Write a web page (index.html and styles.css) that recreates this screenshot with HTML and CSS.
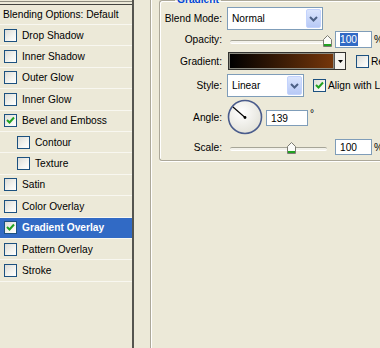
FILE: index.html
```html
<!DOCTYPE html>
<html lang="en">
  <head>
    <meta charset="UTF-8" />
    <title>Layer Style - Gradient Overlay</title>
    <link rel="stylesheet" href="styles.css">
  </head>
  <body>
    <div class="dialog">
      <div class="styles-list">
        <div class="list-top"></div>
        <div class="list-head">Blending Options: Default</div>
        <div class="layer-row"><span class="check"></span>Drop Shadow</div>
        <div class="layer-row"><span class="check"></span>Inner Shadow</div>
        <div class="layer-row"><span class="check"></span>Outer Glow</div>
        <div class="layer-row"><span class="check"></span>Inner Glow</div>
        <div class="layer-row">
          <span class="check"><svg width="11" height="11" viewBox="0 0 11 11"><polyline points="2,5 4.5,7.5 9,2.5" fill="none" stroke="#21a121" stroke-width="2"/></svg></span>Bevel and Emboss
        </div>
        <div class="layer-row sub"><span class="check"></span>Contour</div>
        <div class="layer-row sub"><span class="check"></span>Texture</div>
        <div class="layer-row"><span class="check"></span>Satin</div>
        <div class="layer-row"><span class="check"></span>Color Overlay</div>
        <div class="layer-row selected">
          <span class="check"><svg width="11" height="11" viewBox="0 0 11 11"><polyline points="2,5 4.5,7.5 9,2.5" fill="none" stroke="#21a121" stroke-width="2"/></svg></span>Gradient Overlay
        </div>
        <div class="layer-row"><span class="check"></span>Pattern Overlay</div>
        <div class="layer-row"><span class="check"></span>Stroke</div>
      </div>

      <div class="spacer"></div>

      <div class="options">
        <fieldset class="group">
          <legend>Gradient</legend>

          <div class="opt-row row-blend">
            <span class="opt-label">Blend Mode:</span>
            <div class="combo blend-combo">
              <span class="combo-text">Normal</span>
              <span class="combo-btn"><svg width="9" height="6" viewBox="0 0 9 6"><polyline points="1,1 4.5,4.5 8,1" fill="none" stroke="#4d6185" stroke-width="2"/></svg></span>
            </div>
          </div>

          <div class="opt-row row-opacity">
            <span class="opt-label">Opacity:</span>
            <div class="slider">
              <div class="track"></div>
              <svg class="thumb" style="left: 93px" width="9" height="12" viewBox="0 0 9 12"><path d="M4.5 0.5 L8.5 4.5 L8.5 11.5 L0.5 11.5 L0.5 4.5 Z" fill="#fbfbf8" stroke="#7b7b72"/><rect x="1" y="9" width="7" height="2" fill="#21a121"/></svg>
            </div>
            <span class="field num-field"><span class="sel">100</span></span>
            <span class="unit">%</span>
          </div>

          <div class="opt-row row-gradient">
            <span class="opt-label">Gradient:</span>
            <div class="swatch">
              <span class="swatch-fill"></span>
              <span class="swatch-btn"><svg width="5" height="3" viewBox="0 0 5 3"><path d="M0 0 H5 L2.5 3 Z" fill="#000"/></svg></span>
            </div>
            <span class="check reverse-check"></span>
            <span class="check-label">Reverse</span>
          </div>

          <div class="opt-row row-style">
            <span class="opt-label">Style:</span>
            <div class="combo style-combo">
              <span class="combo-text">Linear</span>
              <span class="combo-btn"><svg width="9" height="6" viewBox="0 0 9 6"><polyline points="1,1 4.5,4.5 8,1" fill="none" stroke="#4d6185" stroke-width="2"/></svg></span>
            </div>
            <span class="check align-check"><svg width="11" height="11" viewBox="0 0 11 11"><polyline points="2,5 4.5,7.5 9,2.5" fill="none" stroke="#21a121" stroke-width="2"/></svg></span>
            <span class="check-label">Align with Layer</span>
          </div>

          <div class="opt-row row-angle">
            <span class="opt-label">Angle:</span>
            <svg class="dial" width="36" height="36" viewBox="0 0 36 36">
              <defs>
                <radialGradient id="dialFill" cx="0.4" cy="0.35" r="0.7">
                  <stop offset="0" stop-color="#ffffff"/>
                  <stop offset="1" stop-color="#e2e1d8"/>
                </radialGradient>
              </defs>
              <circle cx="18" cy="18" r="16.5" fill="url(#dialFill)" stroke="#4a5c8c" stroke-width="1.6"/>
              <line x1="18" y1="18.5" x2="6" y2="8" stroke="#000" stroke-width="1.1"/>
              <circle cx="18" cy="18.5" r="1.4" fill="#000"/>
            </svg>
            <span class="field angle-field">139</span>
            <span class="degree">°</span>
          </div>

          <div class="opt-row row-scale">
            <span class="opt-label">Scale:</span>
            <div class="slider">
              <div class="track"></div>
              <svg class="thumb" style="left: 57px" width="9" height="12" viewBox="0 0 9 12"><path d="M4.5 0.5 L8.5 4.5 L8.5 11.5 L0.5 11.5 L0.5 4.5 Z" fill="#fbfbf8" stroke="#7b7b72"/><rect x="1" y="9" width="7" height="2" fill="#21a121"/></svg>
            </div>
            <span class="field num-field">100</span>
            <span class="unit">%</span>
          </div>
        </fieldset>
      </div>
    </div>
  </body>
</html>
```

FILE: styles.css
```css
body {
  margin: 0;
  background-color: #ece9d8;
  font-family: "Liberation Sans", Arial, sans-serif;
  font-size: 10.2px;
  color: #000;
  overflow: hidden;
}

.dialog {
  display: flex;
  height: 348px;
}

/* left list of layer styles */

.styles-list {
  width: 132px;
  flex: none;
  border-right: 2px solid #55554f;
}

.list-top {
  margin-top: 1px;
  height: 2px;
  border-top: 1px solid #8c8a7e;
  border-bottom: 1px solid #444440;
}

.list-head {
  box-sizing: border-box;
  height: 20px;
  padding-left: 3px;
  display: flex;
  align-items: center;
  border-bottom: 1px solid #f8f7f0;
}

.layer-row {
  box-sizing: border-box;
  height: 21.4px;
  display: flex;
  align-items: center;
  padding-left: 4px;
  border-bottom: 1px solid #f8f7f0;
}

.layer-row .check {
  margin-right: 5px;
}

.layer-row.sub {
  padding-left: 17px;
}

.layer-row.selected {
  background-color: #316ac5;
  color: #fff;
  font-weight: bold;
}

.check {
  box-sizing: border-box;
  width: 13px;
  height: 13px;
  flex: none;
  border: 1px solid #1c5180;
  background: linear-gradient(135deg, #dcdcd7 0%, #f4f4f0 60%, #ffffff 100%);
  display: inline-flex;
  align-items: center;
  justify-content: center;
}

.spacer {
  width: 16px;
  flex: none;
}

/* right options panel */

.options {
  flex: 1;
  border-left: 1px solid #aca899;
  box-shadow: inset 1px 0 0 #ffffff;
  padding-left: 8px;
}

.group {
  margin: -6px 0 0 0;
  padding: 1px 0 5px 0;
  border: 1px solid #aca899;
  border-right: none;
  border-radius: 3px 0 0 3px;
  box-shadow: inset 1px 1px 0 #ffffff, 0 1px 0 #ffffff;
  min-width: 0;
}

.group legend {
  margin-left: 15px;
  padding: 0 2px;
  color: #0046d5;
  font-weight: bold;
  line-height: 12px;
}

.opt-row {
  display: flex;
  align-items: center;
  white-space: nowrap;
}

.opt-label {
  width: 62px;
  flex: none;
  text-align: right;
  margin-right: 5px;
}

.row-blend {
  height: 23px;
  margin-top: 0;
}

.row-opacity {
  height: 17px;
  margin-top: 1px;
}

.row-gradient {
  height: 18px;
  margin-top: 4px;
}

.row-style {
  height: 23px;
  margin-top: 4px;
}

.row-angle {
  height: 36px;
  margin-top: 2px;
}

.row-scale {
  height: 16px;
  margin-top: 4px;
}

.combo {
  box-sizing: border-box;
  height: 23px;
  border: 1px solid #7f9db9;
  background-color: #fff;
  display: flex;
  align-items: center;
  padding: 1px;
}

.blend-combo {
  width: 96px;
}

.style-combo {
  width: 77px;
}

.combo-text {
  flex: 1;
  padding-left: 3px;
}

.combo-btn {
  box-sizing: border-box;
  width: 15px;
  height: 19px;
  border: 1px solid #c3d3fd;
  border-radius: 2px;
  background: linear-gradient(#dbe5fd, #b7c9f6);
  display: flex;
  align-items: center;
  justify-content: center;
}

.slider {
  position: relative;
  width: 102px;
  height: 14px;
  margin-left: 3px;
  flex: none;
}

.track {
  position: absolute;
  left: 0;
  right: 5px;
  top: 7px;
  height: 2px;
  border-top: 1px solid #a6a597;
  border-bottom: 1px solid #fff;
  background-color: #f2f1ea;
  border-radius: 2px;
}

.thumb {
  position: absolute;
  top: 2px;
}

.field {
  box-sizing: border-box;
  height: 17px;
  border: 1px solid #7f9db9;
  background-color: #fff;
  display: inline-flex;
  align-items: center;
  padding-left: 4px;
  flex: none;
}

.num-field {
  width: 37px;
  margin-left: 3px;
}

.sel {
  background-color: #316ac5;
  color: #fff;
  padding: 1px 1px 1px 0;
}

.unit {
  margin-left: 2px;
}

.swatch {
  box-sizing: border-box;
  width: 118px;
  height: 18px;
  margin-left: 1px;
  border: 1px solid #333330;
  display: flex;
  flex: none;
}

.swatch-fill {
  flex: 1;
  background: linear-gradient(to right, #000000, #75360a);
  border: 1px solid #8a8a80;
}

.swatch-btn {
  width: 10px;
  border-left: 1px solid #555;
  background-color: #f5f4ee;
  display: flex;
  align-items: center;
  justify-content: center;
}

.reverse-check {
  margin-left: 10px;
}

.align-check {
  margin-left: 9px;
}

.check-label {
  margin-left: 2px;
}

.dial {
  display: block;
  flex: none;
}

.angle-field {
  width: 42px;
  height: 16px;
  margin-left: 3px;
  margin-top: 2px;
}

.degree {
  margin-left: 2px;
  align-self: flex-start;
  margin-top: 9px;
}

.row-scale .field {
  height: 16px;
}
```
